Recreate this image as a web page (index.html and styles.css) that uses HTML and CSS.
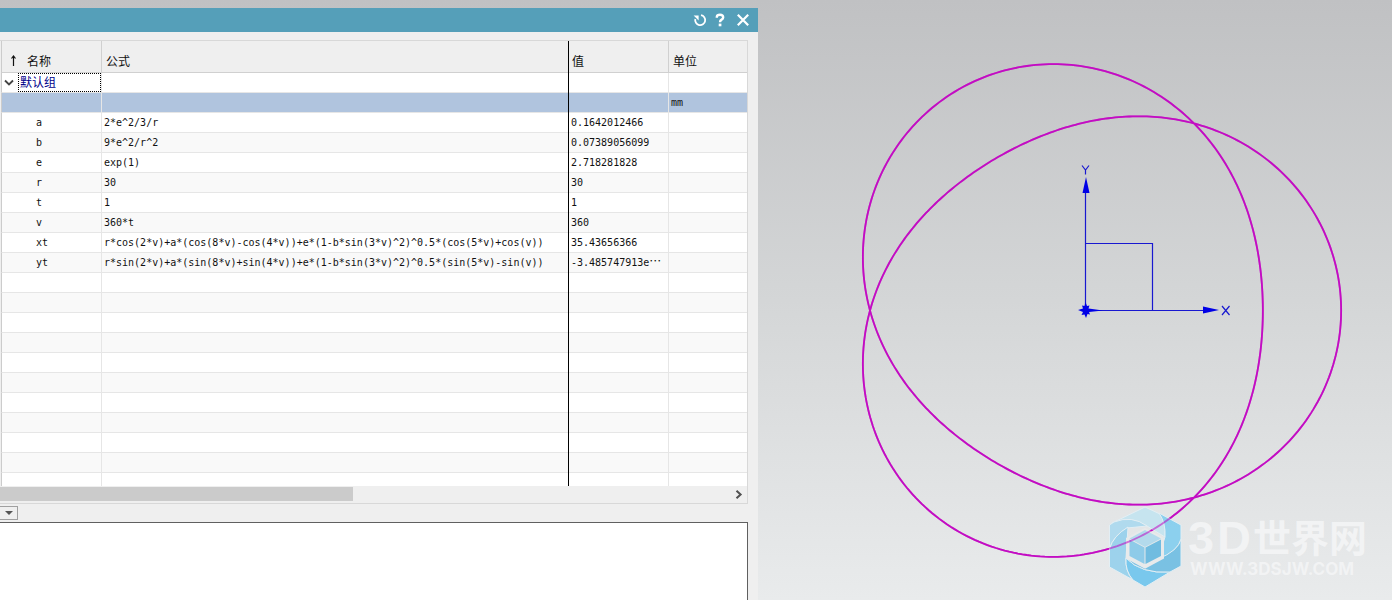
FILE: index.html
```html
<!DOCTYPE html>
<html lang="zh-CN">
<head>
<meta charset="utf-8">
<title>表达式</title>
<link rel="stylesheet" href="styles.css">
</head>
<body>
<main class="workspace">
  <section class="dialog" aria-label="表达式">
    <header class="titlebar">
      <button class="tool" type="button" aria-label="重置"><svg width="14" height="14" viewBox="0 0 14 14"><path d="M8 2.200A5 5 0 1 1 2.300 6" fill="none" stroke="#fff" stroke-width="1.8"/><path d="M.6 2.400H5.600V7.400Z" fill="#fff"/></svg></button>
      <button class="tool" type="button" aria-label="帮助"><svg width="12" height="14" viewBox="0 0 12 14"><path d="M2.8 4.8V4Q3 1.8 6 1.8T9.2 4.3Q9.2 5.7 7.6 6.6T6 9.2" fill="none" stroke="#fff" stroke-width="2.4"/><path d="M4.7 10.6h2.7v2.7H4.7z" fill="#fff"/></svg></button>
      <button class="tool close" type="button" aria-label="关闭"><svg width="12" height="12" viewBox="0 0 12 12"><path d="M.8 .8 11.200 11.200M11.200 .8 .8 11.200" stroke="#fff" stroke-width="2.2"/></svg></button>
    </header>
    <div class="grid-area">
      <table class="expressions">
        <colgroup><col class="c-name"><col class="c-formula"><col class="c-value"><col class="c-unit"></colgroup>
        <thead>
          <tr><th><span class="sort"><svg width="7" height="13" viewBox="0 0 7 13"><path d="M3.500 11V1M1.500 3.500 3.500 1 5.500 3.500" fill="none" stroke="#111" stroke-width="1.2"/></svg>名称</span></th><th>公式</th><th>值</th><th>单位</th></tr>
        </thead>
        <tbody>
          <tr class="group"><td><div class="group-cell"><svg width="10" height="8" viewBox="0 0 10 8"><path d="M1 1.500 5 5.500 9 1.500" fill="none" stroke="#444" stroke-width="1.8"/></svg><span class="focus">默认组</span></div></td><td></td><td></td><td></td></tr>
          <tr class="selected"><td></td><td></td><td></td><td>mm</td></tr>
          <tr><td>a</td><td>2*e^2/3/r</td><td>0.1642012466</td><td></td></tr>
          <tr><td>b</td><td>9*e^2/r^2</td><td>0.07389056099</td><td></td></tr>
          <tr><td>e</td><td>exp(1)</td><td>2.718281828</td><td></td></tr>
          <tr><td>r</td><td>30</td><td>30</td><td></td></tr>
          <tr><td>t</td><td>1</td><td>1</td><td></td></tr>
          <tr><td>v</td><td>360*t</td><td>360</td><td></td></tr>
          <tr><td>xt</td><td>r*cos(2*v)+a*(cos(8*v)-cos(4*v))+e*(1-b*sin(3*v)^2)^0.5*(cos(5*v)+cos(v))</td><td>35.43656366</td><td></td></tr>
          <tr><td>yt</td><td>r*sin(2*v)+a*(sin(8*v)+sin(4*v))+e*(1-b*sin(3*v)^2)^0.5*(sin(5*v)-sin(v))</td><td>-3.485747913e<span class="more">⋯</span></td><td></td></tr>
          <tr><td></td><td></td><td></td><td></td></tr>
          <tr><td></td><td></td><td></td><td></td></tr>
          <tr><td></td><td></td><td></td><td></td></tr>
          <tr><td></td><td></td><td></td><td></td></tr>
          <tr><td></td><td></td><td></td><td></td></tr>
          <tr><td></td><td></td><td></td><td></td></tr>
          <tr><td></td><td></td><td></td><td></td></tr>
          <tr><td></td><td></td><td></td><td></td></tr>
          <tr><td></td><td></td><td></td><td></td></tr>
          <tr><td></td><td></td><td></td><td></td></tr>
          <tr><td></td><td></td><td></td><td></td></tr>
        </tbody>
      </table>
    </div>
    <div class="scrollbar">
      <div class="thumb"></div>
      <button class="arrow" type="button" aria-label="向右滚动"><svg width="8" height="9" viewBox="0 0 8 9"><path d="M1.5 .8 5.6 4.5 1.5 8.2" fill="none" stroke="#505050" stroke-width="2"/></svg></button>
    </div>
    <div class="options"><button class="drop" type="button" aria-label="展开"><svg width="8" height="4" viewBox="0 0 8 4"><path d="M0 0H8L4 4Z" fill="#555"/></svg></button></div>
    <textarea class="editor" aria-label="公式编辑"></textarea>
  </section>
  <section class="viewport" aria-label="图形窗口">
    <svg class="scene" viewBox="758 0 634 600">
      <path id="curve" class="curve"/>
      <g class="axes">
        <path d="M1085.5 310.5V190M1085.5 310.5H1204M1085.5 243.5H1152.5V310.5"/>
        <path class="solid" d="M1086 177 1089.500 193H1082.500ZM1219 310 1203 313.500V306.500Z"/>
        <path class="solid" d="M1078 310 1083 308.500 1082 305.500 1084.500 306 1085.500 302 1087 306 1089.500 305.500 1088.500 308.500 1103 310.500 1089 312 1090 314.500 1087.500 314 1086 318 1084.500 314.500 1081.500 315 1083 312Z"/>
        <path d="M1082 165.500 1085.500 170 1089 165.500M1085.500 170V174.500M1222 306 1229.500 315M1229.500 306 1222 315"/>
      </g>
      <g class="mark">
        <g class="blades">
          <path fill="#c3e4f1" d="M1112 523 1145 507 1160 514Q1166 523 1165 537L1147 526Q1132 515 1112 523Z"/>
          <path fill="#a9d9ef" d="M1109.500 525 1114 522Q1132 515 1147 526L1127 528Q1113 536 1109.500 549Z"/>
          <path fill="#93d0ed" d="M1109.500 549Q1113 536 1128 527L1126 558Q1125 571 1133 580L1109.500 567Z"/>
          <path fill="#6ac4ee" d="M1126 558Q1141 574 1170 572L1145 587 1133 580Q1125 571 1126 558Z"/>
          <path fill="#6bbce3" d="M1126 558 1145 566 1158 558Q1178 551 1181 539V566L1170 572Q1141 574 1126 558Z"/>
          <path fill="#80cdef" d="M1159 513 1181 525V539Q1178 551 1158 559L1165 537Q1166 523 1159 513Z"/>
        </g>
        <path class="ring" d="M1145 529.500 1162.500 539V557.500L1145 567 1127.500 557.500V539Z"/>
        <path fill="#add9ed" d="M1129.500 538.500 1145 530 1161 538.500 1145 547Z"/>
        <path fill="#83c8e9" d="M1129.500 539.500 1144.500 547.500V564L1129.500 556Z"/>
        <path fill="#61b7df" d="M1145.500 547.500 1161 539.500V556L1145.500 564Z"/>
        <text class="brand" x="1188 1217" y="554">3D</text>
        <text class="brand cjk" x="1253" y="552">世界网</text>
        <text class="site" x="1190" y="575">WWW.3DSJW.COM</text>
      </g>
      <use class="show-through" href="#curve"/>
    </svg>
  </section>
</main>
<script src="curve.js"></script>
</body>
</html>
```
FILE: curve.js
```js
// Plots the parametric expressions xt and yt from the table.
const r = 30;
const e = Math.E;
const a = 2 * e ** 2 / 3 / r;
const b = 9 * e ** 2 / r ** 2;
const scale = 7.2;
const points = [];
for (let i = 0; i <= 720; i++) {
  const v = i * Math.PI / 360;
  const k = e * Math.sqrt(1 - b * Math.sin(3 * v) ** 2);
  const x = r * Math.cos(2 * v) + a * (Math.cos(8 * v) - Math.cos(4 * v)) + k * (Math.cos(5 * v) + Math.cos(v));
  const y = r * Math.sin(2 * v) + a * (Math.sin(8 * v) + Math.sin(4 * v)) + k * (Math.sin(5 * v) - Math.sin(v));
  points.push((1086 + x * scale).toFixed(2) + " " + (310.5 - y * scale).toFixed(2));
}
document.getElementById("curve").setAttribute("d", "M" + points.join("L") + "Z");
```
FILE: styles.css
```css
* { box-sizing: border-box; }
body {
  margin: 0;
  font: 12px/16px "Noto Sans CJK SC", sans-serif;
  color: #111;
}
button { padding: 0; border: 0; background: none; display: flex; align-items: center; justify-content: center; }
svg { display: block; }
.workspace {
  display: grid;
  grid-template-columns: minmax(0, 758fr) minmax(0, 634fr);
  height: 100vh;
  overflow: hidden;
  background: linear-gradient(#c0c1c3, #d4d6d7 50%, #e9ebec);
}
.dialog { display: flex; flex-direction: column; margin-top: 8px; background: #efefef; min-height: 0; }
.titlebar { display: flex; flex: none; justify-content: flex-end; align-items: center; gap: 7px; height: 24px; padding-right: 9px; background: #559fb9; }
.close { margin-left: 4px; }
.grid-area { flex: 1; min-height: 0; overflow: hidden; margin: 8px 10px 0 0; border-top: 1px solid #d8d8d8; border-right: 1px solid #d8d8d8; padding-left: 1px; }
.expressions { width: 100%; table-layout: fixed; border-collapse: separate; border-spacing: 0; }
.c-name { width: 100px; }
.c-formula { width: 467px; }
.c-value { width: 100px; }
th { height: 32px; padding: 9px 4px 0; border-bottom: 1px solid #d0d0d0; border-left: 1px solid #d0d0d0; text-align: left; font-weight: 400; white-space: nowrap; }
td { height: 20px; padding: 0 2px; border-bottom: 1px solid #e6e6e6; border-left: 1px solid #e6e6e6; font: 10px/18px "DejaVu Sans Mono", "Noto Sans CJK SC", monospace; white-space: nowrap; overflow: hidden; }
th:first-child, td:first-child { border-left-color: #ccc; }
td:first-child { padding-left: 34px; }
th:nth-child(2), th:nth-child(4) { padding-left: 4px; }
th:nth-child(3), td:nth-child(3) { border-left: 0; box-shadow: inset 1px 0 #000; border-bottom: 0; background-image: linear-gradient(#e6e6e6, #e6e6e6); background-size: 100% 1px; background-position: bottom; background-repeat: no-repeat; }
th:nth-child(3) { padding: 8px 4px 0; background-image: linear-gradient(#d0d0d0, #d0d0d0); }
td:nth-child(3) { padding: 0 0 1px 3px; }
tbody tr { background: #fff; }
tbody tr:nth-child(even) { background: #f9f9f9; }
tbody tr.selected { background: #b0c4de; }
.sort { display: flex; align-items: center; gap: 10px; padding-left: 4px; }
.group td:first-child { padding: 0; }
.group-cell { display: flex; align-items: center; gap: 4px; padding-left: 2px; }
.focus { flex: 1; height: 19px; font: 12px/16px "Noto Sans CJK SC", sans-serif; padding-left: 1px; border: 1px dotted #000; color: #00008b; }
.more { font: 12px/1 "Noto Sans CJK SC", sans-serif; }
.scrollbar { flex: none; display: flex; justify-content: space-between; height: 18px; margin-right: 10px; padding: 1px 0 2px; border-right: 1px solid #d8d8d8; border-bottom: 1px solid #d8d8d8; }
.thumb { flex: 0 0 353px; background: #cbcbcb; }
.arrow { width: 16px; }
.options { flex: none; padding: 2px 0; height: 18px; }
.drop { width: 18px; height: 14px; border: 1px solid #a0a0a0; border-left: 0; }
.editor { flex: none; height: 78px; margin: 0 10px 0 0; border: solid #606060; border-width: 1px 1px 0 0; background: #fff; resize: none; outline: 0; border-radius: 0; }
.viewport { min-width: 0; }
.scene { width: 100%; height: 100%; }
.curve { fill: none; stroke: #c30cc3; stroke-width: 1.8; }
.show-through { opacity: .5; }
.axes path { fill: none; stroke: #1818d0; stroke-width: 1.2; }
.axes .solid { fill: #0000e6; stroke: none; }
.mark { opacity: .88; }
.blades { stroke: #e3f0f6; stroke-width: 1; stroke-linejoin: round; }
.ring { fill: #e9ebec; stroke: #e9ebec; stroke-width: 3; }
.brand { font: bold 47px "Liberation Sans", sans-serif; fill: #f4f5f6; }
.cjk { font: bold 38px "Noto Sans CJK SC", sans-serif; }
.site { font: bold 17px Inter, sans-serif; fill: #f4f5f6; }
```
